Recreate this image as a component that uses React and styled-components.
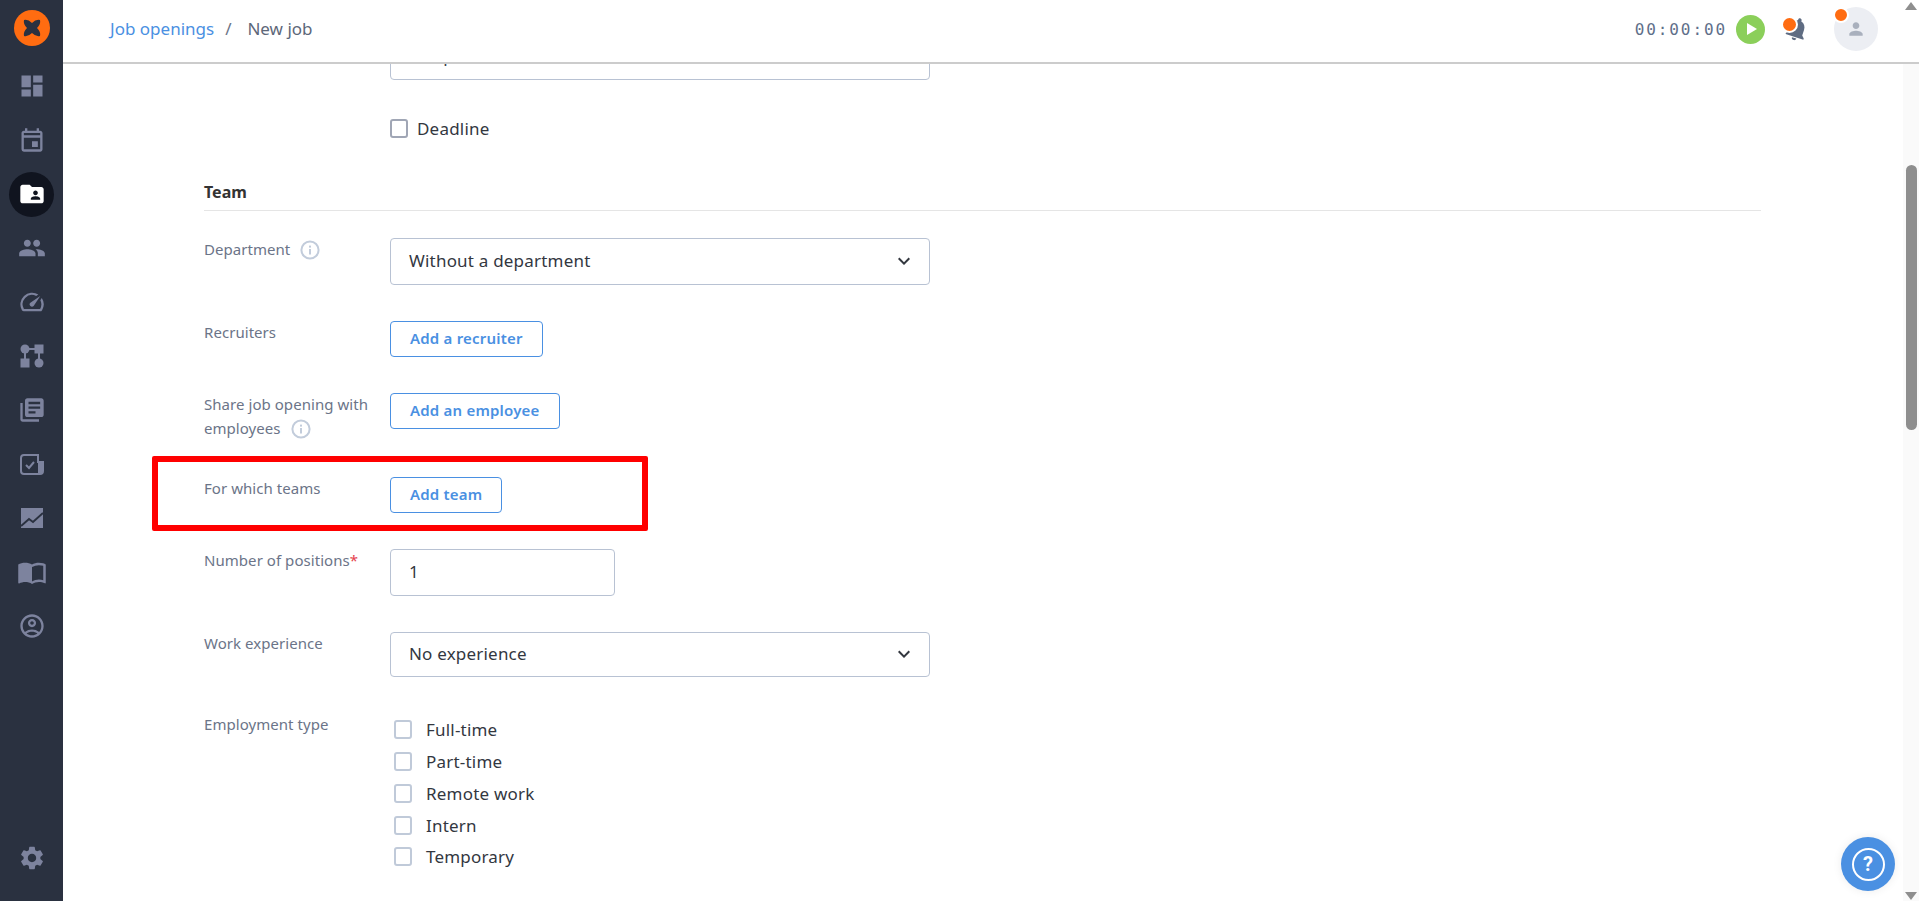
import React from 'react';
import styled, { createGlobalStyle } from 'styled-components';
import {
  MdDashboard,
  MdOutlineEvent,
  MdFolderShared,
  MdPeople,
  MdSpeed,
  MdLibraryBooks,
  MdOutlineImportContacts,
  MdOutlineAccountCircle,
  MdSettings,
  MdKeyboardArrowDown,
  MdNotifications,
  MdPerson,
} from 'react-icons/md';

const GlobalStyle = createGlobalStyle`
  html, body {
    margin: 0;
    height: 100%;
    overflow: hidden;
    background: #fff;
  }
  * { box-sizing: border-box; }
  body {
    font-family: "Noto Sans", "Open Sans", sans-serif;
    color: #33373f;
  }
`;

const Page = styled.div`
  display: flex;
  height: 901px;
  position: relative;
`;

const Sidebar = styled.nav`
  width: 63px;
  flex: none;
  background: #2a3140;
  display: flex;
  flex-direction: column;
  align-items: center;
  padding-bottom: 16px;
`;

const LogoSlot = styled.div`
  height: 59px;
  padding-top: 10px;
  display: flex;
  justify-content: center;
`;

const NavItem = styled.div`
  width: 45px;
  height: 54px;
  display: flex;
  align-items: center;
  justify-content: center;
  color: ${(p) => (p.$active ? '#fff' : '#7d839e')};
  font-size: ${(p) => p.$size || 28}px;
  position: relative;
  margin-top: ${(p) => (p.$bottom ? 'auto' : '0')};
  &::before {
    content: '';
    display: ${(p) => (p.$active ? 'block' : 'none')};
    position: absolute;
    left: 0;
    top: 4.5px;
    width: 45px;
    height: 45px;
    border-radius: 50%;
    background: #10141f;
  }
  svg { position: relative; }
`;

const Main = styled.div`
  flex: 1;
  min-width: 0;
  display: flex;
  flex-direction: column;
`;

const Header = styled.header`
  height: 64px;
  flex: none;
  border-bottom: 2px solid #cccccc;
  display: flex;
  align-items: center;
  padding: 0 0 4px 47px;
`;

const Crumbs = styled.div`
  display: flex;
  align-items: center;
  font-size: 17px;
  flex: 1;
  padding-bottom: 2px;
`;

const CrumbLink = styled.span`
  color: #4a90e2;
`;

const CrumbSep = styled.span`
  color: #6b7488;
  margin: 0 16px 0 11px;
`;

const CrumbCurrent = styled.span`
  color: #5d6779;
`;

const Timer = styled.div`
  font-family: "DejaVu Sans Mono", monospace;
  font-size: 16px;
  letter-spacing: 1.9px;
  color: #5f6f8a;
  margin-right: 9px;
`;

const PlayButton = styled.div`
  width: 29px;
  height: 29px;
  border-radius: 50%;
  background: #8bcf5a;
  display: flex;
  align-items: center;
  justify-content: center;
  padding-left: 2px;
`;

const BellWrap = styled.div`
  width: 28px;
  height: 28px;
  margin-left: 18px;
  position: relative;
  color: #5f6c82;
  font-size: 28px;
  svg { transform: rotate(18deg); display: block; }
`;

const Dot = styled.span`
  position: absolute;
  left: ${(p) => p.$left}px;
  top: ${(p) => p.$top}px;
  width: ${(p) => p.$size}px;
  height: ${(p) => p.$size}px;
  border-radius: 50%;
  background: #ff6c11;
  box-sizing: content-box;
  border: ${(p) => (p.$ring ? '2px solid #fff' : '0')};
`;

const Avatar = styled.div`
  width: 44px;
  height: 44px;
  border-radius: 50%;
  background: #eceef3;
  margin: 0 41px 0 23px;
  position: relative;
  display: flex;
  align-items: center;
  justify-content: center;
  color: #a9b0bd;
  font-size: 20px;
`;

const Body = styled.div`
  flex: 1;
  min-height: 0;
  display: flex;
`;

const Content = styled.main`
  flex: 1;
  min-width: 0;
  overflow: hidden;
  padding-left: 141px;
`;

const Scrollbar = styled.div`
  width: 16px;
  flex: none;
  background: #fafafa;
  display: flex;
  flex-direction: column;
  align-items: center;
  position: relative;
`;

const Thumb = styled.div`
  width: 11px;
  height: 265px;
  margin-top: 101px;
  border-radius: 6px;
  background: #8e8e8e;
`;

const Arrow = styled.div`
  position: absolute;
  left: 2px;
  ${(p) => (p.$down ? 'bottom: 1px;' : 'top: -62px;')}
  width: 0;
  height: 0;
  border-left: 6px solid transparent;
  border-right: 6px solid transparent;
  ${(p) => (p.$down ? 'border-top: 8px solid #8e8e8e;' : 'border-bottom: 8px solid #8e8e8e;')}
`;

const Indented = styled.div`
  padding-left: 186px;
`;

const Control = styled.div`
  width: ${(p) => p.$width || 540}px;
  height: ${(p) => p.$height || 47}px;
  border: 1px solid #b8c2d3;
  border-radius: 4px;
  background: #fff;
  display: flex;
  align-items: center;
  justify-content: space-between;
  padding: 0 13px 2px 18px;
  font-size: 17px;
  letter-spacing: 0.2px;
  color: #33373f;
  svg { font-size: 24px; color: #33373f; }
`;

const ClippedControl = styled(Control)`
  margin-top: -31px;
`;

const CheckRow = styled.label`
  display: flex;
  align-items: center;
  gap: ${(p) => p.$gap}px;
  font-size: 17px;
  letter-spacing: 0.2px;
  color: #33373f;
`;

const DeadlineRow = styled(CheckRow)`
  margin-top: 37px;
  height: 23px;
`;

const Box = styled.span`
  width: 18px;
  height: 19px;
  border-radius: 3px;
  border: 2px solid ${(p) => p.$color};
  flex: none;
`;

const SectionTitle = styled.h3`
  margin: 40px 0 27px;
  width: 1557px;
  font-size: 16px;
  font-weight: 700;
  line-height: 24px;
  padding-bottom: 6px;
  border-bottom: 1px solid #e5e5e5;
  color: #333;
`;

const Fields = styled.div`
  display: flex;
  flex-direction: column;
  gap: 36px;
`;

const Field = styled.div`
  display: grid;
  grid-template-columns: 186px 1fr;
  align-items: start;
`;

const FieldLabel = styled.div`
  font-size: 15px;
  letter-spacing: 0.05px;
  line-height: 24px;
  margin: -1px 0 1px;
  color: #6b7488;
`;

const Required = styled.span`
  color: #e5424d;
`;

const InfoIcon = styled.svg`
  width: 20px;
  height: 20px;
  vertical-align: -5px;
  margin-left: 10px;
`;

const OutlineButton = styled.button`
  height: 36px;
  padding: 0 19px 2px;
  border: 1px solid #4a90e2;
  border-radius: 4px;
  background: #fff;
  color: #4a90e2;
  font-family: inherit;
  font-size: 15px;
  letter-spacing: 0.2px;
  font-weight: 600;
`;

const Options = styled.div`
  padding: 1px 0 0 4px;
`;

const Option = styled(CheckRow)`
  height: 31.75px;
`;

const Highlight = styled.div`
  position: absolute;
  left: 152px;
  top: 456px;
  width: 496px;
  height: 75px;
  border: 6px solid #ff0000;
  border-radius: 2px;
  pointer-events: none;
`;

const HelpButton = styled.div`
  position: absolute;
  left: 1841px;
  top: 837px;
  width: 54px;
  height: 54px;
  border-radius: 50%;
  background: #4a90e2;
  display: flex;
  align-items: center;
  justify-content: center;
  box-shadow: 0 0 10px rgba(0, 0, 0, 0.08);
`;

const HelpRing = styled.div`
  width: 33px;
  height: 33px;
  border-radius: 50%;
  border: 2px solid #fff;
  color: #fff;
  font-family: "Roboto", sans-serif;
  font-weight: 700;
  font-size: 20px;
  display: flex;
  align-items: center;
  justify-content: center;
`;

function Logo() {
  return (
    <svg width="36" height="36" viewBox="0 0 36 36">
      <circle cx="18" cy="18" r="18" fill="#ff6c11" />
      <path
        d="M10 10Q14 9 18 13Q22 9 26 10Q27 14 23 18Q27 22 26 26Q22 27 18 23Q14 27 10 26Q9 22 13 18Q9 14 10 10Z"
        fill="#2a3140"
      />
    </svg>
  );
}

function FlowIcon() {
  return (
    <svg width="24" height="24" viewBox="0 0 24 24" fill="currentColor">
      <circle cx="5" cy="5" r="4.5" />
      <rect x="14.5" y="0.5" width="9" height="9" />
      <rect x="0.5" y="14.5" width="9" height="9" />
      <circle cx="19" cy="19" r="4.5" />
      <path d="M8 4h8v2H8zM4 8h2v8H4zM18 8h2v8h-2z" />
    </svg>
  );
}

function TaskIcon() {
  return (
    <svg width="24" height="21" viewBox="0 0 24 21" fill="none" stroke="currentColor" strokeWidth="2">
      <path d="M18 1H4a3 3 0 0 0-3 3v13a3 3 0 0 0 3 3h16a3 3 0 0 0 3-3V8h-5z" />
      <path d="M18 8h5v9a3 3 0 0 1-3 3h-2z" fill="currentColor" stroke="none" />
      <path d="M6 11l3 3 5-6" />
    </svg>
  );
}

function ChartIcon() {
  return (
    <svg width="22" height="20" viewBox="0 0 22 20">
      <rect width="22" height="20" fill="currentColor" />
      <path d="M0 18L8 11L12 14L22 5" fill="none" stroke="#2a3140" strokeWidth="2" />
    </svg>
  );
}

function Info() {
  return (
    <InfoIcon viewBox="0 0 20 20" fill="none">
      <circle cx="10" cy="10" r="8.6" stroke="#c2ccdb" strokeWidth="2" />
      <rect x="9" y="9" width="2" height="5.5" fill="#c2ccdb" />
      <rect x="9" y="5.6" width="2" height="2" fill="#c2ccdb" />
    </InfoIcon>
  );
}

const employmentTypes = ['Full-time', 'Part-time', 'Remote work', 'Intern', 'Temporary'];

export default function App() {
  return (
    <Page>
      <GlobalStyle />
      <Sidebar>
        <LogoSlot><Logo /></LogoSlot>
        <NavItem><MdDashboard /></NavItem>
        <NavItem><MdOutlineEvent /></NavItem>
        <NavItem $active><MdFolderShared /></NavItem>
        <NavItem><MdPeople /></NavItem>
        <NavItem><MdSpeed /></NavItem>
        <NavItem><FlowIcon /></NavItem>
        <NavItem><MdLibraryBooks /></NavItem>
        <NavItem><TaskIcon /></NavItem>
        <NavItem><ChartIcon /></NavItem>
        <NavItem $size={30}><MdOutlineImportContacts /></NavItem>
        <NavItem><MdOutlineAccountCircle /></NavItem>
        <NavItem $bottom><MdSettings /></NavItem>
      </Sidebar>
      <Main>
        <Header>
          <Crumbs>
            <CrumbLink>Job openings</CrumbLink>
            <CrumbSep>/</CrumbSep>
            <CrumbCurrent>New job</CrumbCurrent>
          </Crumbs>
          <Timer>00:00:00</Timer>
          <PlayButton>
            <svg width="12" height="14" viewBox="0 0 12 14"><path d="M1 1l10 6-10 6z" fill="#fff" /></svg>
          </PlayButton>
          <BellWrap>
            <MdNotifications />
            <Dot $left={-2} $top={1} $size={13} $ring />
          </BellWrap>
          <Avatar>
            <MdPerson />
            <Dot $left={-1} $top={0} $size={12} $ring />
          </Avatar>
        </Header>
        <Body>
          <Content>
            <Indented>
              <ClippedControl>Template</ClippedControl>
              <DeadlineRow $gap={9}>
                <Box $color="#a0a6b5" />
                Deadline
              </DeadlineRow>
            </Indented>
            <SectionTitle>Team</SectionTitle>
            <Fields>
              <Field>
                <FieldLabel>Department<Info /></FieldLabel>
                <Control>Without a department<MdKeyboardArrowDown /></Control>
              </Field>
              <Field>
                <FieldLabel>Recruiters</FieldLabel>
                <div><OutlineButton>Add a recruiter</OutlineButton></div>
              </Field>
              <Field>
                <FieldLabel>Share job opening with employees<Info /></FieldLabel>
                <div><OutlineButton>Add an employee</OutlineButton></div>
              </Field>
              <Field>
                <FieldLabel>For which teams</FieldLabel>
                <div><OutlineButton>Add team</OutlineButton></div>
              </Field>
              <Field>
                <FieldLabel>Number of positions<Required>*</Required></FieldLabel>
                <Control $width={225}>1</Control>
              </Field>
              <Field>
                <FieldLabel>Work experience</FieldLabel>
                <Control $height={45}>No experience<MdKeyboardArrowDown /></Control>
              </Field>
              <Field>
                <FieldLabel>Employment type</FieldLabel>
                <Options>
                  {employmentTypes.map((name) => (
                    <Option key={name} $gap={14}>
                      <Box $color="#c0cad9" />
                      {name}
                    </Option>
                  ))}
                </Options>
              </Field>
            </Fields>
          </Content>
          <Scrollbar>
            <Arrow />
            <Thumb />
            <Arrow $down />
          </Scrollbar>
        </Body>
      </Main>
      <Highlight />
      <HelpButton><HelpRing>?</HelpRing></HelpButton>
    </Page>
  );
}
